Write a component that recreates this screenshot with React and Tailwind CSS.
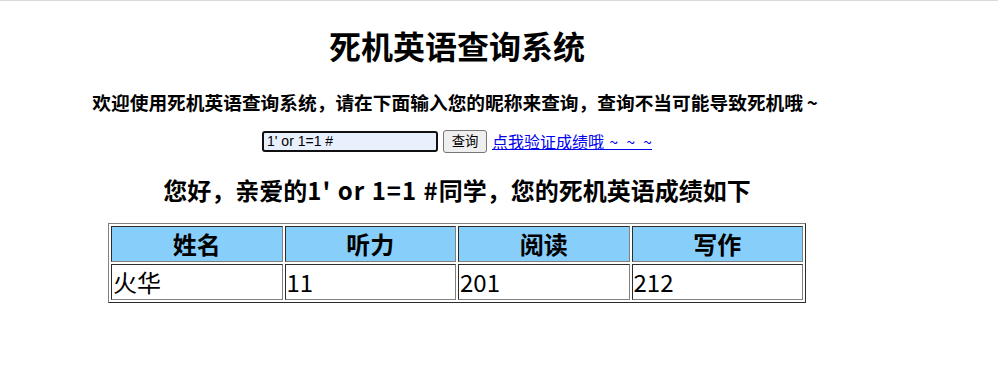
function Tilde() {
  return <span className="inline-block w-[1em] text-center">~</span>;
}

export default function App() {
  const font = { fontFamily: '"Noto Sans CJK SC", "Noto Sans", sans-serif' };
  return (
    <div className="w-[998px] h-[390px] bg-white text-black overflow-hidden" style={font}>
      <div className="h-px bg-[#dadada]" />
      <div className="w-[914px] flex flex-col items-center">
        <h1 className="mt-[21px] text-[32px] font-bold leading-[46px]">死机英语查询系统</h1>
        <h3 className="mt-[20px] text-[18.72px] font-bold leading-[27px]">
          欢迎使用死机英语查询系统，请在下面输入您的昵称来查询，查询不当可能导致死机哦<Tilde />
        </h3>
        <div className="mt-[15px] h-[23px] flex items-center">
          <input
            readOnly
            value="1' or 1=1 #"
            className="w-[176px] h-[21px] border-2 border-[#101010] rounded-[3px] bg-[#e8f0fe] px-[3px] text-[14px] outline-none"
            style={{ fontFamily: '"Liberation Sans", Arial, "Noto Sans CJK SC", sans-serif' }}
          />
          <button
            className="ml-[5px] h-[23px] w-[44px] border border-[#767676] rounded-[3px] bg-[#efefef] text-[13.33px] leading-none"
            style={{ fontFamily: '"Liberation Sans", Arial, "Noto Sans CJK SC", sans-serif' }}
          >
            查询
          </button>
          <a href="#" className="ml-[5px] text-[16px] text-[#0000ee] underline leading-[23px] whitespace-pre">
            {"点我验证成绩哦\u2004~\u2002~\u2002~"}
          </a>
        </div>
        <h2 className="mt-[19px] text-[24px] font-bold leading-[35px]">
          您好，亲爱的<span className="tracking-[1px]">1' or 1=1 #</span>同学，您的死机英语成绩如下
        </h2>
        <table className="mt-[16px] w-[698px] table-fixed border-separate border-spacing-[2px] border border-[#808080] [border-style:outset]">
          <thead>
            <tr>
              {["姓名", "听力", "阅读", "写作"].map((h) => (
                <th
                  key={h}
                  className="bg-[#87cefa] border border-[#808080] [border-style:inset] p-px text-[24px] font-bold leading-[32px] text-center"
                >
                  {h}
                </th>
              ))}
            </tr>
          </thead>
          <tbody>
            <tr>
              {["火华", "11", "201", "212"].map((d) => (
                <td
                  key={d}
                  className="border border-[#808080] [border-style:inset] p-px text-[24px] leading-[32px] text-left"
                >
                  {d}
                </td>
              ))}
            </tr>
          </tbody>
        </table>
      </div>
    </div>
  );
}
